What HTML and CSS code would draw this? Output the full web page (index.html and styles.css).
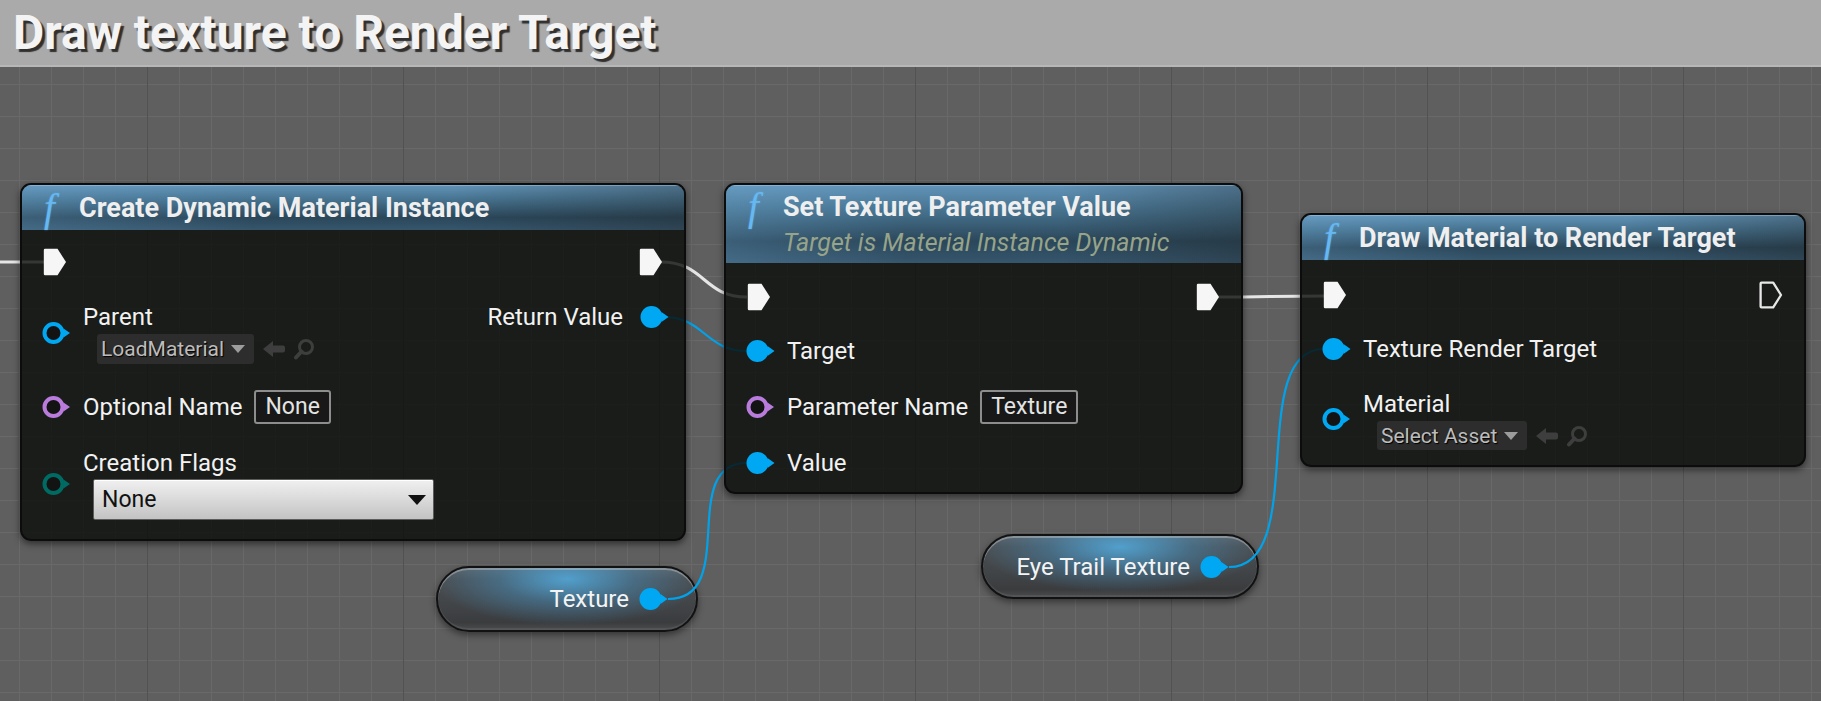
FILE: index.html
```html
<!DOCTYPE html>
<html lang="en">
<head>
<meta charset="utf-8">
<title>Draw texture to Render Target</title>
<link rel="stylesheet" href="styles.css">
</head>
<body>
<svg class="defs" width="0" height="0" aria-hidden="true">
  <defs>
    <symbol id="exec-filled" viewBox="0 0 26 30">
      <path d="M3,1.8 H15.5 L24,15 L15.5,28.2 H3 Q1.8,28.2 1.8,27 V3 Q1.8,1.8 3,1.8 Z" fill="#f6f6f6"/>
    </symbol>
    <symbol id="exec-hollow" viewBox="0 0 26 30">
      <path d="M3.5,2.6 H15.2 L23,15 L15.2,27.4 H3.5 Q2.6,27.4 2.6,26.5 V3.5 Q2.6,2.6 3.5,2.6 Z" fill="none" stroke="#e8e8e8" stroke-width="2.3" stroke-linejoin="round"/>
    </symbol>
    <symbol id="pin-filled" viewBox="0 0 30 24">
      <circle cx="11.5" cy="12" r="11" fill="currentColor"/>
      <path d="M21.5,7 L28.5,12 L21.5,17 Z" fill="currentColor"/>
    </symbol>
    <symbol id="pin-hollow" viewBox="0 0 30 24">
      <circle cx="11.5" cy="12" r="9" fill="#121312" stroke="currentColor" stroke-width="4"/>
      <path d="M21.5,7.5 L28,12 L21.5,16.5 Z" fill="currentColor"/>
    </symbol>
    <symbol id="ico-use" viewBox="0 0 24 20">
      <path d="M1,10 L11,2 L11,6.5 L21,6.5 Q23,6.5 23,8.5 L23,11.5 Q23,13.5 21,13.5 L11,13.5 L11,18 Z" fill="currentColor"/>
    </symbol>
    <symbol id="ico-browse" viewBox="0 0 22 22">
      <circle cx="13" cy="9" r="6.5" fill="none" stroke="currentColor" stroke-width="3"/>
      <line x1="8.5" y1="13.5" x2="3" y2="19.5" stroke="currentColor" stroke-width="4" stroke-linecap="round"/>
    </symbol>
  </defs>
</svg>

<div class="app">
  <header class="titlebar">
    <h1 class="page-title">Draw texture to Render Target</h1>
  </header>

  <main class="graph">
    <div class="var v-texture">
      <span class="var-label">Texture</span>
      <svg class="pin pin-blue"><use href="#pin-filled"/></svg>
    </div>
    <div class="var v-eye">
      <span class="var-label">Eye Trail Texture</span>
      <svg class="pin pin-blue"><use href="#pin-filled"/></svg>
    </div>

    <svg class="wires" width="1821" height="634" viewBox="0 0 1821 634">
      <path class="wire exec" d="M0,195 L56,195"/>
      <path class="wire exec" d="M661,195 C705,195 703,230 747,230"/>
      <path class="wire exec" d="M1217,230 C1270,230 1270,229 1324,229"/>
      <path class="wire data" d="M663,250 C705,250 705,284 747,284"/>
      <path class="wire data" d="M668,532 C740,532 677,396 747,396"/>
      <path class="wire data" d="M1229,500 C1310,500 1245,282 1324,282"/>
    </svg>

    <section class="node n-create">
      <div class="node-head">
        <div class="head-row"><span class="fx">f</span><span class="node-title">Create Dynamic Material Instance</span></div>
      </div>
      <div class="node-body">
        <div class="pins pins-in">
          <div class="pin-row exec-row"><span class="slot"><svg class="pin-exec"><use href="#exec-filled"/></svg></span></div>
          <div class="pin-row r-parent">
            <span class="slot"><svg class="pin pin-blue"><use href="#pin-hollow"/></svg></span>
            <div class="pin-stack">
              <span class="label">Parent</span>
              <div class="asset-pick">
                <span class="asset-box">LoadMaterial<i class="caret"></i></span>
                <svg class="ico ico-use-s"><use href="#ico-use"/></svg>
                <svg class="ico ico-browse-s"><use href="#ico-browse"/></svg>
              </div>
            </div>
          </div>
          <div class="pin-row r-optional">
            <span class="slot"><svg class="pin pin-purple"><use href="#pin-hollow"/></svg></span>
            <span class="label">Optional Name</span>
            <span class="name-box">None</span>
          </div>
          <div class="pin-row r-flags">
            <span class="slot"><svg class="pin pin-teal"><use href="#pin-hollow"/></svg></span>
            <div class="pin-stack">
              <span class="label">Creation Flags</span>
              <div class="combo"><span>None</span><i class="combo-caret"></i></div>
            </div>
          </div>
        </div>
        <div class="pins pins-out">
          <div class="pin-row exec-row"><svg class="pin-exec"><use href="#exec-filled"/></svg></div>
          <div class="pin-row r-return">
            <span class="label">Return Value</span>
            <svg class="pin pin-blue"><use href="#pin-filled"/></svg>
          </div>
        </div>
      </div>
    </section>

    <section class="node n-set">
      <div class="node-head">
        <div class="head-row"><span class="fx">f</span><span class="node-title">Set Texture Parameter Value</span></div>
        <div class="subtitle">Target is Material Instance Dynamic</div>
      </div>
      <div class="node-body">
        <div class="pins pins-in">
          <div class="pin-row exec-row"><span class="slot"><svg class="pin-exec"><use href="#exec-filled"/></svg></span></div>
          <div class="pin-row r-line">
            <span class="slot"><svg class="pin pin-blue"><use href="#pin-filled"/></svg></span>
            <span class="label">Target</span>
          </div>
          <div class="pin-row r-box">
            <span class="slot"><svg class="pin pin-purple"><use href="#pin-hollow"/></svg></span>
            <span class="label">Parameter Name</span>
            <span class="name-box">Texture</span>
          </div>
          <div class="pin-row r-line">
            <span class="slot"><svg class="pin pin-blue"><use href="#pin-filled"/></svg></span>
            <span class="label">Value</span>
          </div>
        </div>
        <div class="pins pins-out">
          <div class="pin-row exec-row"><svg class="pin-exec"><use href="#exec-filled"/></svg></div>
        </div>
      </div>
    </section>

    <section class="node n-draw">
      <div class="node-head">
        <div class="head-row"><span class="fx">f</span><span class="node-title">Draw Material to Render Target</span></div>
      </div>
      <div class="node-body">
        <div class="pins pins-in">
          <div class="pin-row exec-row"><span class="slot"><svg class="pin-exec"><use href="#exec-filled"/></svg></span></div>
          <div class="pin-row r-line">
            <span class="slot"><svg class="pin pin-blue"><use href="#pin-filled"/></svg></span>
            <span class="label">Texture Render Target</span>
          </div>
          <div class="pin-row r-material">
            <span class="slot"><svg class="pin pin-blue"><use href="#pin-hollow"/></svg></span>
            <div class="pin-stack">
              <span class="label">Material</span>
              <div class="asset-pick">
                <span class="asset-box">Select Asset<i class="caret"></i></span>
                <svg class="ico ico-use-s"><use href="#ico-use"/></svg>
                <svg class="ico ico-browse-s"><use href="#ico-browse"/></svg>
              </div>
            </div>
          </div>
        </div>
        <div class="pins pins-out">
          <div class="pin-row exec-row"><svg class="pin-exec"><use href="#exec-hollow"/></svg></div>
        </div>
      </div>
    </section>
  </main>
</div>
</body>
</html>
```

FILE: styles.css
```css
* { box-sizing: border-box; }
html, body { margin: 0; padding: 0; }
body {
  width: 1821px;
  height: 701px;
  overflow: hidden;
  background: #5f5f5f;
  font-family: Roboto, "Noto Sans", sans-serif;
}
.defs { position: absolute; width: 0; height: 0; }

.app { display: flex; flex-direction: column; height: 701px; }

.titlebar {
  flex: none;
  height: 67px;
  background: #aaaaaa;
  border-bottom: 2px solid #b7b7b7;
  padding-left: 13px;
  display: flex;
  align-items: center;
}
.page-title {
  margin: 0;
  font: 700 48px/1 Roboto, sans-serif;
  color: #f4f4f4;
  text-shadow: 3px 3px 1px #303030;
  white-space: nowrap;
}

.graph {
  flex: 1;
  position: relative;
  overflow: hidden;
  background-color: #5f5f5f;
  background-image:
    linear-gradient(to right, #525252 0, #525252 1px, transparent 1px),
    linear-gradient(to right, #696969 0, #696969 1px, transparent 1px),
    linear-gradient(to bottom, #696969 0, #696969 1px, transparent 1px);
  background-size: 256px 100%, 32px 32px, 32px 32px;
  background-position: 147px 0, 19px 0, 0 17px;
}

.wires { position: absolute; left: 0; top: 0; z-index: 2; }
.wire { fill: none; }
.wire.exec { stroke: #e6e6e6; stroke-width: 3; }
.wire.data { stroke: #00a3ea; stroke-width: 2.2; }

/* ---------- function nodes ---------- */
.node {
  position: absolute;
  z-index: 3;
  display: flex;
  flex-direction: column;
  border: 2px solid #0b0c0b;
  border-radius: 11px;
  background: rgba(8, 11, 8, 0.8);
  box-shadow: 0 3px 7px rgba(0, 0, 0, 0.5);
  overflow: hidden;
}
.n-create { left: 20px; top: 116px; width: 666px; height: 358px; }
.n-set    { left: 724px; top: 116px; width: 519px; height: 311px; }
.n-draw   { left: 1300px; top: 146px; width: 506px; height: 254px; }

.node-head {
  flex: none;
  height: 45px;
  padding-left: 22px;
  display: flex;
  flex-direction: column;
  justify-content: center;
  background:
    linear-gradient(90deg, rgba(120, 180, 225, 0.22) 0%, rgba(0, 0, 0, 0) 35%, rgba(0, 0, 0, 0) 65%, rgba(30, 30, 30, 0.3) 100%),
    linear-gradient(180deg, #6294b9 0%, #487592 30%, #2b475a 72%, #36566d 100%);
  box-shadow: inset 0 1px 0 rgba(170, 210, 240, 0.45);
}
.n-set .node-head { height: 78px; justify-content: flex-start; padding-top: 6px; }

.head-row { display: flex; align-items: center; height: 32px; }
.fx {
  width: 35px;
  flex: none;
  font-family: "Liberation Serif", "DejaVu Serif", serif;
  font-style: italic;
  font-size: 39px;
  line-height: 32px;
  color: #66b8f2;
  text-shadow: 0 0 2px rgba(100, 180, 240, 0.6);
}
.node-title {
  font-weight: 700;
  font-size: 27px;
  line-height: 32px;
  color: #efefef;
  white-space: nowrap;
}
.subtitle {
  margin-top: 6px;
  margin-left: 35px;
  font-style: italic;
  font-size: 25px;
  line-height: 28px;
  color: #97a48a;
  white-space: nowrap;
}

.node-body { flex: 1; display: flex; justify-content: space-between; }
.pins { display: flex; flex-direction: column; }
.pins-in { padding-left: 20px; }
.pins-out { padding-right: 14px; align-items: flex-end; }

.pin-row { display: flex; align-items: center; }
.exec-row { height: 30px; }
.slot { width: 30px; flex: none; display: flex; align-items: center; }
.pin-exec { width: 26px; height: 30px; display: block; flex: none; filter: blur(0.35px); }
.pins-out .pin-exec { margin-right: 6px; }
.pin { width: 30px; height: 24px; display: block; flex: none; }
.pin-blue { color: #00a8f3; }
.pin-purple { color: #b97bdc; }
.pin-teal { color: #006b62; }

.label {
  margin-left: 11px;
  font-size: 24px;
  line-height: 32px;
  color: #f2f2f2;
  white-space: nowrap;
}
.pins-out .label { margin-left: 0; margin-right: 17px; }
.pin-stack { display: flex; flex-direction: column; margin-left: 11px; }
.pin-stack .label { margin-left: 0; }

.asset-pick { display: flex; align-items: center; margin-left: 14px; margin-top: 1px; }
.asset-box {
  display: flex;
  align-items: center;
  height: 30px;
  padding: 0 9px 0 4px;
  border-radius: 3px;
  background: #2c2d2c;
  color: #bcbcbc;
  font-size: 21px;
  text-shadow: 1px 1px 1px #000;
  white-space: nowrap;
}
.caret {
  margin-left: 7px;
  width: 0; height: 0;
  border-left: 7px solid transparent;
  border-right: 7px solid transparent;
  border-top: 8px solid #9c9c9c;
}
.ico { color: #3d3e3d; flex: none; }
.ico-use-s { width: 24px; height: 20px; margin-left: 8px; }
.ico-browse-s { width: 22px; height: 22px; margin-left: 7px; }

.name-box {
  margin-left: 12px;
  height: 34px;
  padding: 0 9px;
  border: 2px solid #8d8d8d;
  border-radius: 3px;
  background: #171817;
  color: #e4e4e4;
  font-size: 23px;
  line-height: 30px;
  white-space: nowrap;
}

.combo {
  margin-left: 10px;
  width: 341px;
  height: 41px;
  display: flex;
  align-items: center;
  justify-content: space-between;
  padding: 0 7px 0 8px;
  border: 1px solid #5c5c5c;
  border-radius: 2px;
  background: linear-gradient(#f0f0f0, #dcdcdc 45%, #c3c3c3);
  box-shadow: inset 0 1px 0 #ffffff;
  color: #111;
  font-size: 23px;
}
.combo-caret {
  width: 0; height: 0;
  border-left: 9px solid transparent;
  border-right: 9px solid transparent;
  border-top: 10px solid #111;
}

/* node 1 rows */
.n-create .pins { padding-top: 17px; }
.n-create .r-parent { margin-top: 24px; }
.n-create .r-optional { margin-top: 26px; height: 34px; }
.n-create .r-flags { margin-top: 23px; }
.n-create .r-return { margin-top: 24px; height: 32px; }

/* node 2 rows */
.n-set .pins { padding-top: 19px; }
.n-set .pins-in .pin-row + .pin-row { margin-top: 23px; }
.r-line { height: 32px; }
.r-box { height: 34px; }

/* node 3 rows */
.n-draw .pins { padding-top: 20px; }
.n-draw .pins-in .pin-row + .pin-row { margin-top: 23px; }
.n-draw .asset-box { height: 29px; }

/* ---------- variable getters ---------- */
.var {
  position: absolute;
  z-index: 1;
  display: flex;
  align-items: center;
  justify-content: flex-end;
  padding-right: 27px;
  border: 2px solid #121212;
  border-radius: 34px;
  background:
    radial-gradient(ellipse 52% 75% at 50% 18%, rgba(82, 168, 218, 0.9), rgba(70, 150, 200, 0.42) 50%, rgba(70, 150, 200, 0) 100%),
    linear-gradient(180deg, #5c5f62 0%, #4b4e51 18%, #424548 58%, #3a3c3e 88%, #4a4c4e 100%);
  box-shadow: inset 0 2px 0 rgba(210, 210, 210, 0.4), inset 0 -2px 0 rgba(120, 120, 120, 0.25), 0 3px 7px rgba(0, 0, 0, 0.45);
}
.v-texture { left: 436px; top: 499px; width: 262px; height: 66px; }
.v-eye { left: 981px; top: 467px; width: 278px; height: 65px; }
.var-label {
  margin-right: 10px;
  font-size: 24px;
  line-height: 32px;
  color: #f4f4f4;
  white-space: nowrap;
}
```
